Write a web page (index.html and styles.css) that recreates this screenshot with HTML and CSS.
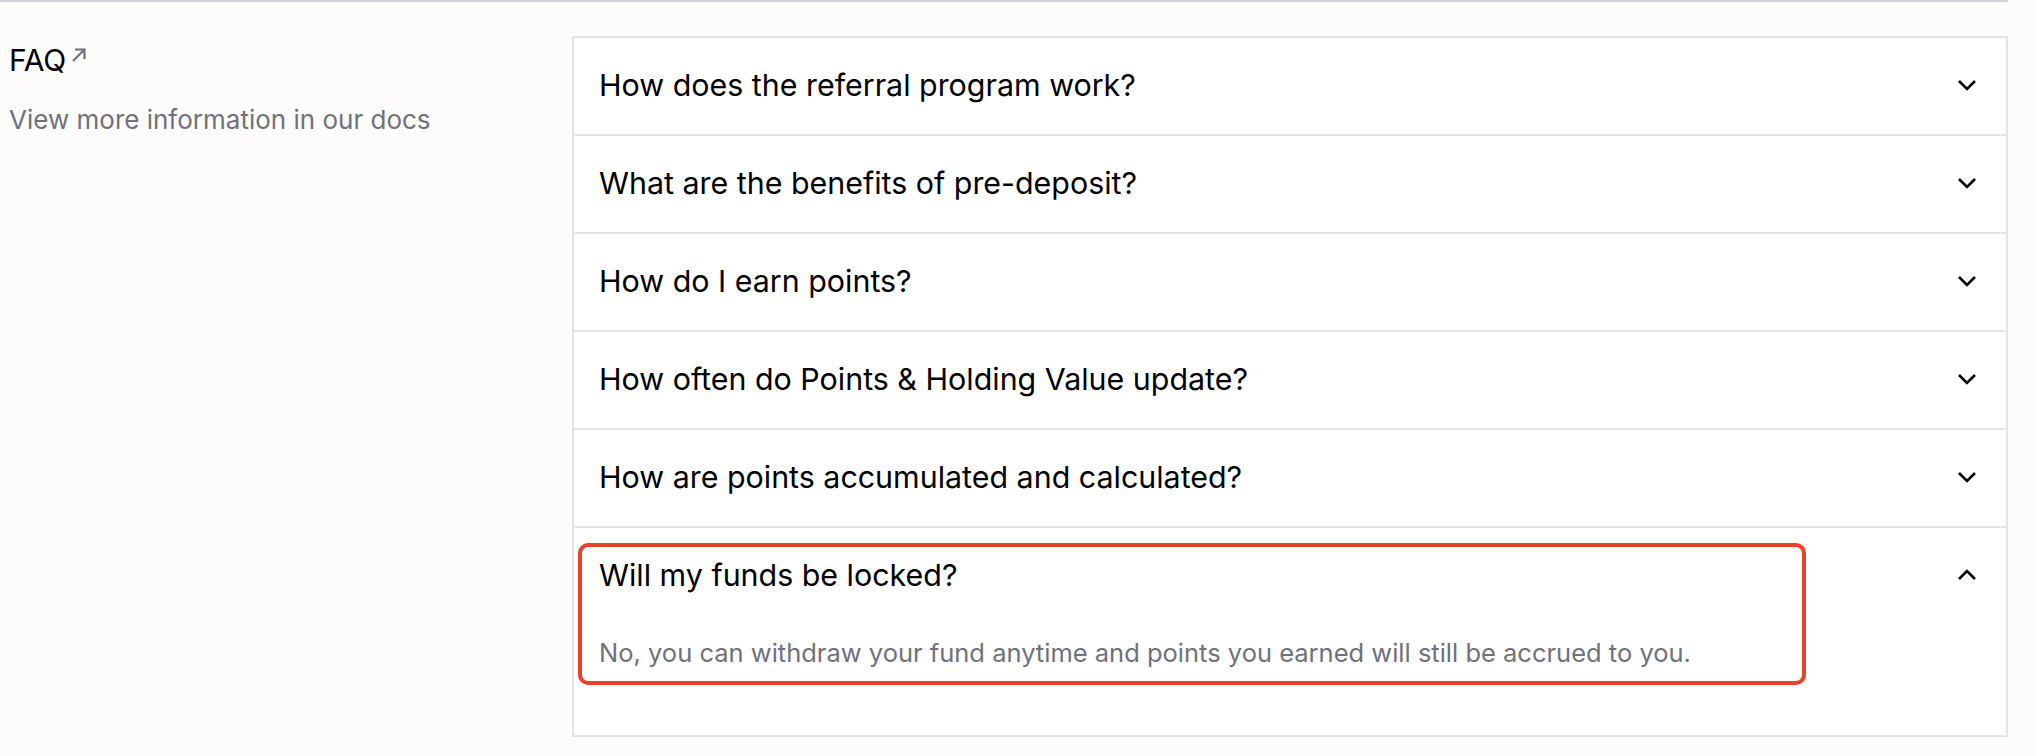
FILE: index.html
```html
<!DOCTYPE html>
<html lang="en">
<head>
<meta charset="utf-8">
<title>FAQ</title>
<link rel="stylesheet" href="styles.css">
</head>
<body>
<section class="page">
  <div class="intro">
    <a class="intro-title" href="#">FAQ<svg class="ext-icon" viewBox="0 0 18 18" width="18" height="18" aria-hidden="true"><path d="M3 15L14.5 3.5M5 3.5H14.5V13" fill="none" stroke="currentColor" stroke-width="2.2"/></svg></a>
    <p class="intro-sub">View more information in our docs</p>
  </div>
  <div class="faq-list">
    <div class="faq-item">
      <div class="faq-q"><span>How does the referral program work?</span><svg class="chev" viewBox="0 0 20 12" width="20" height="12"><polyline points="2,2 10,10 18,2" fill="none" stroke="currentColor" stroke-width="2.6"/></svg></div>
    </div>
    <div class="faq-item">
      <div class="faq-q"><span>What are the benefits of pre-deposit?</span><svg class="chev" viewBox="0 0 20 12" width="20" height="12"><polyline points="2,2 10,10 18,2" fill="none" stroke="currentColor" stroke-width="2.6"/></svg></div>
    </div>
    <div class="faq-item">
      <div class="faq-q"><span>How do I earn points?</span><svg class="chev" viewBox="0 0 20 12" width="20" height="12"><polyline points="2,2 10,10 18,2" fill="none" stroke="currentColor" stroke-width="2.6"/></svg></div>
    </div>
    <div class="faq-item">
      <div class="faq-q"><span>How often do Points &amp; Holding Value update?</span><svg class="chev" viewBox="0 0 20 12" width="20" height="12"><polyline points="2,2 10,10 18,2" fill="none" stroke="currentColor" stroke-width="2.6"/></svg></div>
    </div>
    <div class="faq-item">
      <div class="faq-q"><span>How are points accumulated and calculated?</span><svg class="chev" viewBox="0 0 20 12" width="20" height="12"><polyline points="2,2 10,10 18,2" fill="none" stroke="currentColor" stroke-width="2.6"/></svg></div>
    </div>
    <div class="faq-item open">
      <div class="faq-q"><span>Will my funds be locked?</span><svg class="chev" viewBox="0 0 20 12" width="20" height="12"><polyline points="2,10 10,2 18,10" fill="none" stroke="currentColor" stroke-width="2.6"/></svg></div>
      <p class="faq-a">No, you can withdraw your fund anytime and points you earned will still be accrued to you.</p>
      <div class="highlight"></div>
    </div>
  </div>
</section>
</body>
</html>
```

FILE: styles.css
```css
html, body {
  margin: 0;
  padding: 0;
  background: #fdfcfa;
  font-family: Inter, "Liberation Sans", Arial, sans-serif;
  color: #09090b;
}

.page {
  width: 2008px;
  border-top: 2px solid #d2d4d9;
  display: flex;
  padding-top: 34px;
  box-sizing: border-box;
}

.intro {
  width: 572px;
  padding-left: 9px;
  box-sizing: border-box;
  flex-shrink: 0;
}

.intro-title {
  display: inline-flex;
  align-items: flex-start;
  font-size: 30px;
  line-height: 38px;
  color: #000;
  text-decoration: none;
  letter-spacing: -0.2px;
  margin-top: 5px;
}

.ext-icon {
  color: #6f6f79;
  margin-left: 4px;
  margin-top: 5px;
}

.intro-sub {
  margin: 24px 0 0;
  font-size: 26px;
  line-height: 34px;
  color: #71717a;
}

.faq-list {
  flex: 1;
  background: #fff;
  border: 2px solid #e4e4e8;
}

.faq-item {
  border-bottom: 2px solid #e4e4e8;
  position: relative;
}

.faq-item:last-child {
  border-bottom: none;
}

.faq-q {
  height: 96px;
  display: flex;
  align-items: center;
  justify-content: space-between;
  padding: 0 29px 2px 25px;
  box-sizing: border-box;
  font-size: 30.4px;
  line-height: 38px;
  color: #000;
}

.chev {
  color: #000;
  flex-shrink: 0;
}

.faq-a {
  margin: 0;
  padding: 13px 25px 66px;
  font-size: 25.5px;
  line-height: 32px;
  color: #71717a;
}

.highlight {
  position: absolute;
  left: 4px;
  top: 15px;
  width: 1228px;
  height: 142px;
  border: 4px solid #e8432a;
  border-radius: 10px;
  box-sizing: border-box;
  pointer-events: none;
}
```
